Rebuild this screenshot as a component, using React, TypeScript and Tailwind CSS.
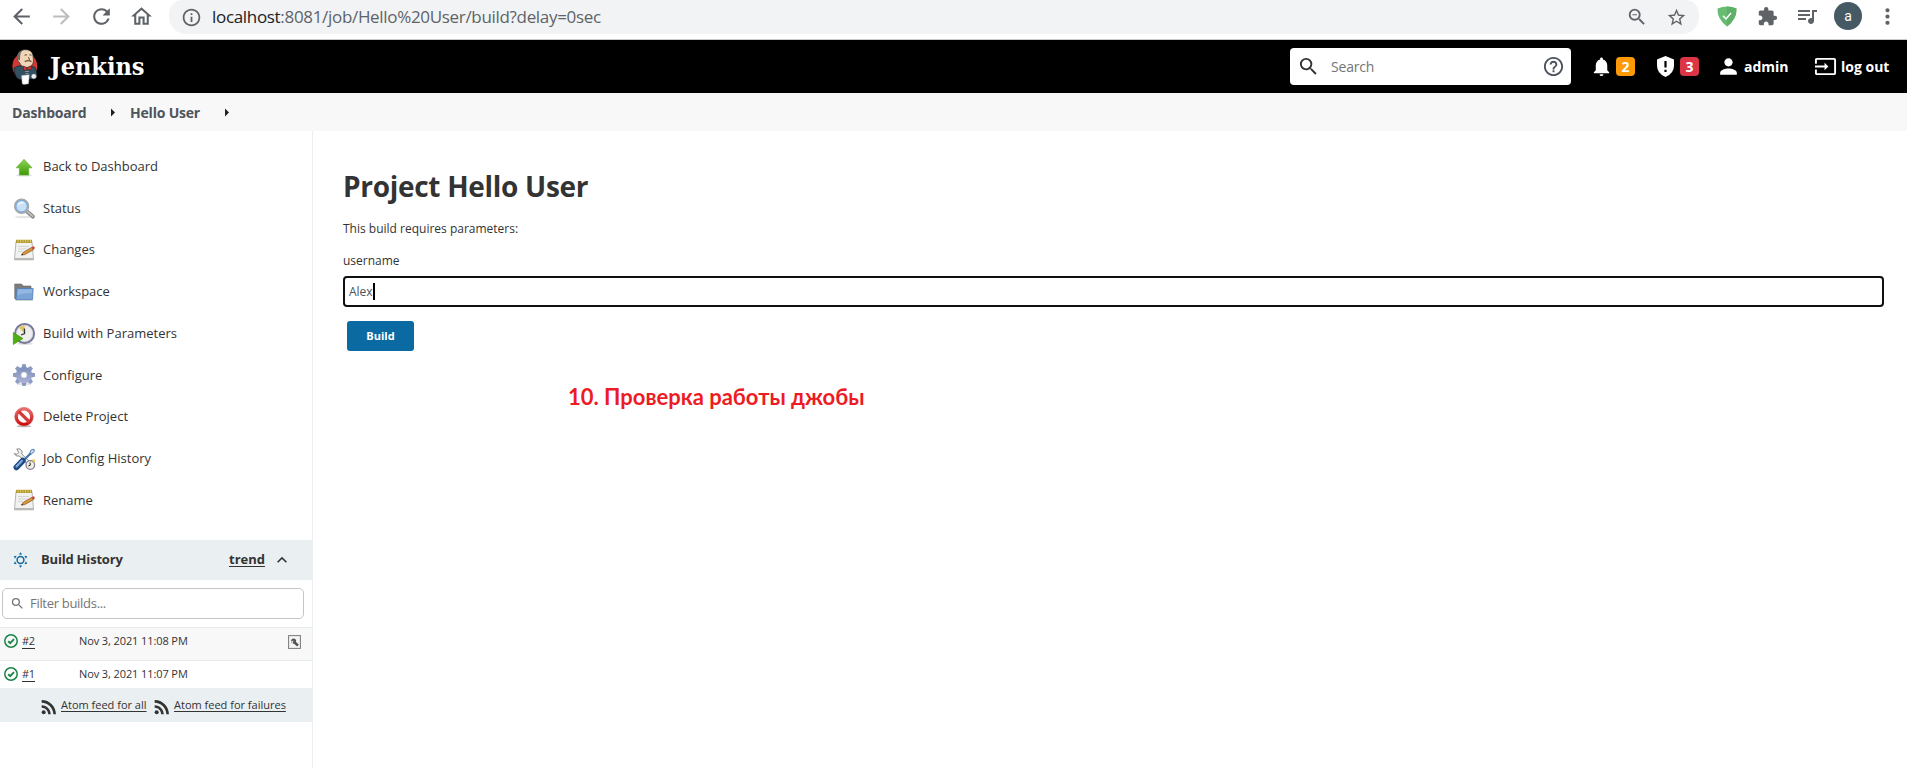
import React from "react";
import {
  MdArrowBack,
  MdArrowForward,
  MdRefresh,
  MdOutlineHome,
  MdInfoOutline,
  MdStarBorder,
  MdExtension,
  MdQueueMusic,
  MdMoreVert,
  MdSearch,
  MdHelpOutline,
  MdNotifications,
  MdPerson,
  MdInput,
  MdRssFeed,
  MdKeyboardArrowUp,
  MdZoomOut,
} from "react-icons/md";

function Butler() {
  return (
    <svg width="26" height="36" viewBox="0 0 26 36">
      <ellipse cx="12.8" cy="17" rx="12.4" ry="13" fill="#d33833" />
      <path d="M2 19 Q5 16.500 11 16.500 L20 17 Q24 18 24.500 22 L25 26 Q24 29 19 30 L10 31 Q4 30 3 25 Z" fill="#335061" stroke="#16222b" strokeWidth=".7" />
      <path d="M5.500 9 Q5 2 12 .7 Q20 0 21 6.500 L21.500 12 Q21 17.500 15 18.500 Q9 18 7.500 13.500 Q5.500 13 5.500 9Z" fill="#f0d6b7" stroke="#2b2b2b" strokeWidth=".7" />
      <path d="M5.200 10 Q4.500 3 10.500 1.200 Q8 4 8.200 7 L8 11.500 Z" fill="#6d6b6d" />
      <path d="M12.500 6.200 l2.500-.5 M17.300 5.800 l2.200.4 M16.500 8 l1 3" stroke="#3b2d22" strokeWidth=".8" fill="none" />
      <path d="M12.800 12.600 q3.500-2 6.700 0" stroke="#6b5240" strokeWidth="1.300" fill="none" />
      <path d="M11.500 17 l3.500 2 l4-2 l.4 4.300 l-4-1.600 l-3.900 2z" fill="#d33833" stroke="#5d1513" strokeWidth=".5" />
      <path d="M9.600 26.500 l7.600-.8 l-.6 9 l-4.800.8 l-1.600-.7z" fill="#fff" stroke="#aaa" strokeWidth=".4" />
      <circle cx="21.800" cy="27.300" r="2.600" fill="#eee" stroke="#335061" strokeWidth=".5" />
      <path d="M13 22.500 h4 M13.500 24.500 h3" stroke="#9fb0bb" strokeWidth=".7" />
    </svg>
  );
}

function UpArrow() {
  return (
    <svg width="24" height="24" viewBox="0 0 24 24">
      <defs>
        <linearGradient id="ug" x1="0" y1="0" x2="0" y2="1">
          <stop offset="0" stopColor="#8fd456" />
          <stop offset="1" stopColor="#3f9a06" />
        </linearGradient>
      </defs>
      <ellipse cx="12" cy="20.300" rx="8" ry="1.200" fill="#ddd" />
      <path d="M12 4.300 L20 12.800 H16.700 V20 H7.400 V12.800 H4.200 Z" fill="url(#ug)" stroke="#55ab1f" strokeWidth=".6" />
    </svg>
  );
}

function Magnifier() {
  return (
    <svg width="24" height="24" viewBox="0 0 24 24">
      <ellipse cx="11" cy="20" rx="8" ry="1.300" fill="#e6e6e6" />
      <path d="M15 14.500 L20.800 19.600" stroke="#8b8b8b" strokeWidth="4" strokeLinecap="round" />
      <path d="M15.500 14.800 L20.600 19.300" stroke="#c9c9c9" strokeWidth="1.500" strokeLinecap="round" />
      <circle cx="9.600" cy="9.200" r="6.900" fill="#c4ddf3" stroke="#a8a8a8" strokeWidth="1.600" />
      <circle cx="9.600" cy="9.200" r="5.700" fill="#c9e0f6" stroke="#6a9fd8" strokeWidth="1" />
      <path d="M5.500 8.500 A4.200 4.200 0 0 1 12.500 6 Q8.500 6.500 5.500 8.500" fill="#eef6fd" />
    </svg>
  );
}

function Notepad() {
  return (
    <svg width="24" height="24" viewBox="0 0 24 24">
      <path d="M4 3.500 H20 L21.500 21.500 H2.500 Z" fill="#f1f1ef" stroke="#aeaeac" strokeWidth=".9" />
      <path d="M2.300 20 H21.700 V22.300 H2.300Z" fill="#b9b9b7" />
      <rect x="4" y="1.800" width="16" height="3.200" fill="#b29a2e" />
      <path d="M6 1.500v3M8.500 1.500v3M11 1.500v3M13.500 1.500v3M16 1.500v3M18.500 1.500v3" stroke="#e6d780" strokeWidth=".8" />
      <path d="M6 8.500h11M6 11h9M6 13.500h5" stroke="#cfcfcf" strokeWidth=".8" />
      <path d="M9.500 17 L11.500 14.200 L20 9.300 L21.300 11.800 L12.700 16.600 Z" fill="#dd9a3c" stroke="#80501a" strokeWidth=".7" />
      <path d="M20 9 l1.700-.8 q1.500.8 1 2.300 l-1.500 1z" fill="#d8352a" />
      <path d="M9.300 17.200 l1-1.500 l.8 1.200z" fill="#222" />
    </svg>
  );
}

function Folder() {
  return (
    <svg width="24" height="24" viewBox="0 0 24 24">
      <path d="M2.700 4 H9.500 L11.500 6 H19 V10 L4 19.500 L2.700 18.500 Z" fill="#7b7d7a" stroke="#686a67" strokeWidth=".6" />
      <path d="M3.500 20.300 H21" stroke="#ccc" />
      <path d="M5 8.500 H21.200 L20.500 19.500 H4 Z" fill="#7aa4d6" stroke="#4f7fba" strokeWidth=".8" />
      <path d="M5.800 9.300 H20.300 L20.100 13 Q12 13 5.500 15Z" fill="#92b7e2" />
    </svg>
  );
}

function ClockPlay() {
  return (
    <svg width="24" height="24" viewBox="0 0 24 24">
      <ellipse cx="13" cy="21.700" rx="8" ry="1.200" fill="#ddd" />
      <circle cx="12.600" cy="11.500" r="9.500" fill="#eeeeec" stroke="#77759a" strokeWidth="2" />
      <circle cx="12.600" cy="11.500" r="8.200" fill="none" stroke="#c7c7d3" strokeWidth=".7" />
      <path d="M12.600 11.500 L7 5.500 Q10 3 12.600 3.500 Z" fill="#e2c65a" />
      <path d="M12.400 6.500 L12.600 11.500 L9 13" stroke="#333" strokeWidth="1.300" fill="none" />
      <path d="M1.300 10.500 L11 16.500 L1.300 22.500 Z" fill="#4fae12" stroke="#3a8a08" strokeWidth=".6" />
    </svg>
  );
}

function Gear() {
  const teeth = [0, 45, 90, 135, 180, 225, 270, 315];
  return (
    <svg width="24" height="24" viewBox="0 0 24 24">
      <defs>
        <linearGradient id="gg" gradientUnits="userSpaceOnUse" x1="0" y1="1" x2="0" y2="23">
          <stop offset="0" stopColor="#7289b2" />
          <stop offset="1" stopColor="#b5b8de" />
        </linearGradient>
      </defs>
      <ellipse cx="12" cy="21" rx="8" ry="1.500" fill="#e4e4e4" />
      <g fill="#8e9cc4">
        {teeth.map((t) => (
          <path key={t} d="M10.300 1 H13.700 L14.700 6 H9.300 Z" transform={`rotate(${t} 12 12)`} />
        ))}
      </g>
      <circle cx="12" cy="12" r="5.600" fill="none" stroke="url(#gg)" strokeWidth="5" />
      <circle cx="12" cy="12" r="3.200" fill="#fff" stroke="#8a93b8" strokeWidth=".6" />
    </svg>
  );
}

function NoEntry() {
  return (
    <svg width="24" height="24" viewBox="0 0 24 24">
      <defs>
        <linearGradient id="ng" x1="0" y1="0" x2="0" y2="1">
          <stop offset="0" stopColor="#e87070" />
          <stop offset="1" stopColor="#cf0c0c" />
        </linearGradient>
      </defs>
      <ellipse cx="12" cy="21.200" rx="7.500" ry="1" fill="#bbb" />
      <circle cx="12" cy="11.700" r="7.700" fill="#fff" stroke="url(#ng)" strokeWidth="3.200" />
      <path d="M6.700 6.400 L17.300 17" stroke="#d93636" strokeWidth="3.200" />
      <circle cx="12" cy="11.700" r="9.300" fill="none" stroke="#d04040" strokeWidth=".5" />
    </svg>
  );
}

function Tools() {
  return (
    <svg width="24" height="24" viewBox="0 0 24 24">
      <path d="M4.800 2 q4-1 5.200 2.500 q.3 1.500-.3 2.500 L19 16 l-2.500 2.500 L7.500 9 q-3.500 1.200-5.300-2.500 L5 7.300 L6.800 5.500 Z" fill="#f0f0ee" stroke="#7d7d7a" strokeWidth=".9" />
      <path d="M21.500 3.500 L11 14" stroke="#4472a8" strokeWidth="2.200" />
      <path d="M22 2.200 l-3 .8 l-1.200 3 l1.500 1 l3-2.500z" fill="#cfe0f2" stroke="#3465a4" strokeWidth=".8" />
      <path d="M10.700 13.800 L4.500 20.300" stroke="#204a87" strokeWidth="6" strokeLinecap="round" />
      <path d="M10 13.800 L4.500 19.500" stroke="#86aedb" strokeWidth="2" strokeLinecap="round" />
      <circle cx="18.300" cy="18" r="4.300" fill="#f4eedd" stroke="#877f9d" strokeWidth="1.300" />
      <path d="M18 15.500 l.3 2.700 l-2 .8" stroke="#222" strokeWidth="1" fill="none" />
      <path d="M19.500 12.500 h3.500 l-.3 3z" fill="#ecd43c" />
    </svg>
  );
}

const tasks: { label: string; icon: () => React.JSX.Element; cls: string }[] = [
  { label: "Back to Dashboard", icon: UpArrow, cls: "tracking-[0px]" },
  { label: "Status", icon: Magnifier, cls: "tracking-[0px]" },
  { label: "Changes", icon: Notepad, cls: "tracking-[0px]" },
  { label: "Workspace", icon: Folder, cls: "tracking-[0px]" },
  { label: "Build with Parameters", icon: ClockPlay, cls: "tracking-[0px]" },
  { label: "Configure", icon: Gear, cls: "tracking-[0px]" },
  { label: "Delete Project", icon: NoEntry, cls: "tracking-[0px]" },
  { label: "Job Config History", icon: Tools, cls: "tracking-[0px]" },
  { label: "Rename", icon: Notepad, cls: "tracking-[0px]" },
];

function BrowserBar() {
  return (
    <div className="flex h-10 shrink-0 items-start overflow-hidden border-b border-[#c8cacc] bg-white text-[#5f6368]">
      <div className="flex h-8 w-[169px] shrink-0 items-center pl-[9px]">
        <MdArrowBack className="size-[25px]" />
        <MdArrowForward className="ml-[15px] size-[25px] text-[#bbbdbf]" />
        <MdRefresh className="ml-[15px] size-[25px]" />
        <MdOutlineHome className="ml-[15px] size-[25px]" />
      </div>
      <div className="flex h-[34px] w-[1530px] shrink-0 items-center rounded-b-[17px] rounded-t-[14px] bg-[#f1f3f4] pl-3">
        <MdInfoOutline className="size-[21px]" />
        <div className="ml-[10px] flex-1 whitespace-nowrap text-[17px] leading-[34px] tracking-[-0.32px]">
          <span className="text-[#202124]">localhost</span>:8081/job/Hello%20User/build?delay=0sec
        </div>
        <MdZoomOut className="size-[22px]" />
        <MdStarBorder className="ml-[18px] mr-[12px] size-[21px]" />
      </div>
      <div className="flex h-8 items-center">
        <svg className="ml-[18px]" width="20" height="21" viewBox="0 0 20 21">
          <path d="M10 .5 Q14.500 .5 19.500 2.500 Q20 13 10 20.500 Q0 13 .5 2.500 Q5.500 .5 10 .5Z" fill="#68bc71" />
          <path d="M10 .5 Q14.500 .5 19.500 2.500 Q20 13 10 20.500Z" fill="#61b06a" />
          <path d="M6 9.700 l3 3.200 l5-6" stroke="#fff" strokeWidth="1.500" fill="none" />
        </svg>
        <MdExtension className="ml-[20px] size-[21px]" />
        <MdQueueMusic className="ml-[17px] size-[24px]" />
        <div className="ml-[15px] flex size-7 items-center justify-center rounded-full bg-[#455a64] font-[Roboto] text-[14px] text-white">a</div>
        <MdMoreVert className="ml-[13px] size-[25px]" />
      </div>
    </div>
  );
}

function Header() {
  return (
    <header className="flex h-[53px] shrink-0 items-center bg-black text-[14px] font-bold text-white">
      <div className="ml-3 flex w-[1278px] items-center">
        <Butler />
        <span className="ml-3 whitespace-nowrap font-['DejaVu_Serif_Condensed','DejaVu_Serif',serif] text-[25px] leading-[30px] tracking-[0px]">Jenkins</span>
      </div>
      <div className="flex h-[37px] w-[281px] items-center rounded-[4px] bg-white pl-[7px] pr-[6px] font-normal">
        <MdSearch className="size-[23px] text-[#333]" />
        <span className="ml-[11px] flex-1 text-[14px] tracking-[-0.2px] text-[#757575]">Search</span>
        <MdHelpOutline className="size-[23px] text-[#4d545d]" />
      </div>
      <MdNotifications className="ml-[19px] size-[23px]" />
      <span className="ml-[3px] flex size-[19px] items-center justify-center rounded-[4px] bg-[#ff9a06]">2</span>
      <svg className="ml-[22px]" width="17" height="21" viewBox="0 0 17 21">
        <path d="M8.500 0 L17 3.500 V9.500 Q17 17.500 8.500 21 Q0 17.500 0 9.500 V3.500Z" fill="#fff" />
        <path d="M8.500 5 v6.500 M8.500 13.700 v2.300" stroke="#000" strokeWidth="2.200" />
      </svg>
      <span className="ml-[6px] flex size-[19px] items-center justify-center rounded-[4px] bg-[#dc3545]">3</span>
      <MdPerson className="ml-[17px] size-[25px]" />
      <span className="ml-[3px] w-[48px] whitespace-nowrap tracking-[0px]">admin</span>
      <MdInput className="ml-[22px] size-[23px]" />
      <span className="ml-[4px] whitespace-nowrap tracking-[0px]">log out</span>
    </header>
  );
}

function CrumbArrow() {
  return (
    <svg width="4" height="9" viewBox="0 0 4 9" className="shrink-0">
      <path d="M0 .5 L4 4.500 L0 8.500Z" fill="#222" />
    </svg>
  );
}

function BuildRow({ n, time, shaded }: { n: string; time: string; shaded?: boolean }) {
  return (
    <div className={shaded ? "flex h-[33px] items-start border-t border-[#e8ebed] bg-[#f8f8f8] pt-[6px]" : "flex h-[28px] items-start border-t border-[#e8ebed] bg-white pt-[6px]"}>
      <svg className="ml-1 shrink-0" width="14" height="14" viewBox="0 0 14 14">
        <circle cx="7" cy="7" r="6.200" fill="none" stroke="#1a8446" strokeWidth="1.500" />
        <path d="M4.200 7.200 l2 1.900 l3.800-3.900" stroke="#1a8446" strokeWidth="1.900" fill="none" />
      </svg>
      <span className="ml-1 h-[15px] w-[57px] text-[11px] leading-[13px] tracking-[-0.3px]"><span className="border-b border-[#333]">{n}</span></span>
      <span className="whitespace-nowrap text-[11px] leading-[13px] tracking-[-0.1px]">{time}</span>
      {shaded && (
        <svg className="ml-auto mr-[11px] mt-[1px]" width="13" height="14" viewBox="0 0 13 14">
          <rect x=".6" y=".6" width="11.800" height="12.800" fill="#f4f4f4" stroke="#777" strokeWidth="1" />
          <path d="M6 7 L10 10.500" stroke="#555" strokeWidth="2.600" />
          <circle cx="5.600" cy="5.900" r="2.500" fill="#555" />
          <path d="M3 6.500 L5.500 5.500 L4.500 9Z" fill="#ddd" />
        </svg>
      )}
    </div>
  );
}

function Sidebar() {
  return (
    <aside className="flex w-[313px] shrink-0 flex-col border-r border-[#eaeff2]">
      <nav className="flex h-[409px] flex-col pt-[15px]">
        {tasks.map(({ label, icon: Icon, cls }) => (
          <a key={label} className="flex h-[41.7px] items-center pl-3">
            <Icon />
            <span className={`ml-[7px] whitespace-nowrap text-[13px] ${cls}`}>{label}</span>
          </a>
        ))}
      </nav>
      <div className="flex h-10 items-center bg-[#eaeff2] text-[13px] font-bold">
        <svg className="ml-[13px]" width="15" height="16" viewBox="-7.500 -8 15 16">
          <circle r="3.400" fill="none" stroke="#0b6aa2" strokeWidth="1.500" />
          {[0, 60, 120, 180, 240, 300].map((a) => (
            <path key={a} d="M-1.700 -5.400 L0 -7.700 L1.700 -5.400Z" fill="#0b6aa2" transform={`rotate(${a})`} />
          ))}
        </svg>
        <span className="ml-[13px] w-[188px] whitespace-nowrap tracking-[-0.2px]">Build History</span>
        <span className="w-[33px] whitespace-nowrap underline underline-offset-2">trend</span>
        <MdKeyboardArrowUp className="ml-[10px] size-[20px]" />
      </div>
      <div className="ml-[2px] mt-2 flex h-[31px] w-[302px] items-center rounded-[5px] border border-[#c4c4c4] bg-white pl-[7px] text-[#757575]">
        <MdSearch className="size-[15px]" />
        <span className="ml-[5px] text-[13px] tracking-[-0.3px]">Filter builds...</span>
      </div>
      <div className="mt-2">
        <BuildRow n="#2" time="Nov 3, 2021 11:08 PM" shaded />
        <BuildRow n="#1" time="Nov 3, 2021 11:07 PM" />
      </div>
      <div className="flex h-[34px] items-center bg-[#eaeff2] text-[11px]">
        <MdRssFeed className="ml-[38px] mt-1 size-[22px]" />
        <span className="ml-[1px] w-[87px] whitespace-nowrap underline underline-offset-2">Atom feed for all</span>
        <MdRssFeed className="ml-[3px] mt-1 size-[22px]" />
        <span className="ml-[1px] whitespace-nowrap underline underline-offset-2">Atom feed for failures</span>
      </div>
    </aside>
  );
}

export default function App() {
  return (
    <div className="flex h-[768px] w-[1907px] flex-col overflow-hidden bg-white font-['Open_Sans','Noto_Sans',sans-serif] text-[#333]">
      <BrowserBar />
      <Header />
      <div className="flex h-[38px] shrink-0 items-center bg-[#f8f8f8] pl-3 text-[14px] font-bold text-[#4d545d]">
        <span className="w-[99px] whitespace-nowrap tracking-[-0.2px]">Dashboard</span>
        <CrumbArrow />
        <span className="ml-[15px] w-[95px] whitespace-nowrap tracking-[-0.2px]">Hello User</span>
        <CrumbArrow />
      </div>
      <div className="flex min-h-0 flex-1">
        <Sidebar />
        <main className="flex flex-1 flex-col pl-[30px] pr-[23px] pt-[35px]">
          <h1 className="h-10 whitespace-nowrap text-[28px] font-bold leading-10 tracking-[-0.3px]">Project Hello User</h1>
          <p className="mt-[13px] h-5 whitespace-nowrap text-[12px] leading-5 tracking-[0px]">This build requires parameters:</p>
          <label className="mt-[12px] h-5 whitespace-nowrap text-[12px] font-medium leading-5">username</label>
          <div className="mt-[5px] flex h-[31px] items-center rounded-[4px] border-2 border-[#101010] pl-1">
            <span className="w-[25px] whitespace-nowrap text-[12px] text-[#4d545d]">Alex</span>
            <span className="-ml-px h-[17px] w-[1.500px] bg-black" />
          </div>
          <button className="ml-1 mt-[14px] h-[30px] w-[67px] rounded-[3px] bg-[#0b6aa2] text-[11px] font-bold text-white">Build</button>
          <p className="ml-[225px] mt-[31px] h-[30px] whitespace-nowrap font-['Lato','Open_Sans',sans-serif] text-[22px] font-bold leading-[30px] text-[#ed1c24]">10. Проверка работы джобы</p>
        </main>
      </div>
    </div>
  );
}
